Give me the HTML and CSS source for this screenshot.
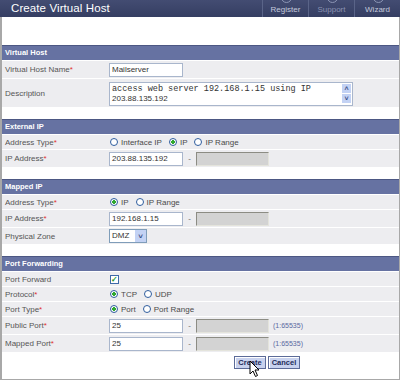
FILE: index.html
```html
<!DOCTYPE html>
<html>
<head>
  <meta charset="UTF-8">
  <title>Create Virtual Host</title>
  <link rel="stylesheet" href="styles.css">
</head>
<body>
  <div class="topbar">
    <div class="topbar-title">Create Virtual Host</div>
    <div class="topbar-tabs">
      <div class="tab"><span class="tab-icon"></span>Register</div>
      <div class="tab tab-dim"><span class="tab-icon"></span>Support</div>
      <div class="tab"><span class="tab-icon"></span>Wizard</div>
    </div>
  </div>

  <div class="page">
    <div class="section">
      <div class="section-head">Virtual Host</div>
      <div class="row">
        <div class="label">Virtual Host Name<span class="req">*</span></div>
        <div class="field"><div class="input">Mailserver</div></div>
      </div>
      <div class="row row-desc">
        <div class="label">Description</div>
        <div class="field">
          <div class="textarea">
            <div class="textarea-text">
              <div class="mono">access web server 192.168.1.15 using IP</div>
              <div>203.88.135.192</div>
            </div>
            <div class="scroll">
              <span class="scroll-btn">&#708;</span>
              <span class="scroll-btn">&#709;</span>
            </div>
          </div>
        </div>
      </div>
    </div>

    <div class="section">
      <div class="section-head">External IP</div>
      <div class="row row-sm">
        <div class="label">Address Type<span class="req">*</span></div>
        <div class="field options">
          <span class="opt"><span class="radio"></span>Interface IP</span>
          <span class="opt"><span class="radio checked"></span>IP</span>
          <span class="opt"><span class="radio"></span>IP Range</span>
        </div>
      </div>
      <div class="row">
        <div class="label">IP Address<span class="req">*</span></div>
        <div class="field">
          <div class="input">203.88.135.192</div>
          <span class="dash">-</span>
          <div class="input input-off"></div>
        </div>
      </div>
    </div>

    <div class="section">
      <div class="section-head">Mapped IP</div>
      <div class="row row-sm">
        <div class="label">Address Type<span class="req">*</span></div>
        <div class="field options">
          <span class="opt"><span class="radio checked"></span>IP</span>
          <span class="opt"><span class="radio"></span>IP Range</span>
        </div>
      </div>
      <div class="row">
        <div class="label">IP Address<span class="req">*</span></div>
        <div class="field">
          <div class="input">192.168.1.15</div>
          <span class="dash">-</span>
          <div class="input input-off"></div>
        </div>
      </div>
      <div class="row row-zone">
        <div class="label">Physical Zone</div>
        <div class="field">
          <div class="select"><span class="select-text">DMZ</span><span class="select-btn">&#709;</span></div>
        </div>
      </div>
    </div>

    <div class="section">
      <div class="section-head">Port Forwarding</div>
      <div class="row row-sm">
        <div class="label">Port Forward</div>
        <div class="field"><span class="checkbox">&#10003;</span></div>
      </div>
      <div class="row row-sm">
        <div class="label">Protocol<span class="req">*</span></div>
        <div class="field options">
          <span class="opt"><span class="radio checked"></span>TCP</span>
          <span class="opt"><span class="radio"></span>UDP</span>
        </div>
      </div>
      <div class="row row-sm">
        <div class="label">Port Type<span class="req">*</span></div>
        <div class="field options">
          <span class="opt"><span class="radio checked"></span>Port</span>
          <span class="opt"><span class="radio"></span>Port Range</span>
        </div>
      </div>
      <div class="row">
        <div class="label">Public Port<span class="req">*</span></div>
        <div class="field">
          <div class="input">25</div>
          <span class="dash">-</span>
          <div class="input input-off"></div>
          <span class="hint">(1:65535)</span>
        </div>
      </div>
      <div class="row">
        <div class="label">Mapped Port<span class="req">*</span></div>
        <div class="field">
          <div class="input">25</div>
          <span class="dash">-</span>
          <div class="input input-off"></div>
          <span class="hint">(1:65535)</span>
        </div>
      </div>
    </div>

    <div class="actions">
      <span class="btn">Create</span>
      <span class="btn">Cancel</span>
      <svg class="cursor" width="12" height="18" viewBox="0 0 12 18">
        <path d="M1 1 L1 14 L4 11 L6.5 16.5 L8.5 15.5 L6 10 L10 10 Z" fill="#fff" stroke="#000" stroke-width="1"/>
      </svg>
    </div>
  </div>
</body>
</html>
```

FILE: styles.css
```css
/* Admin page: Create Virtual Host */
body {
  margin: 0;
  font-family: "Liberation Sans", Arial, sans-serif;
  font-size: 8px;
  color: #4a4a4a;
  background: #fff;
  width: 400px;
  height: 380px;
  overflow: hidden;
}

.topbar {
  height: 17px;
  background: linear-gradient(#434c72, #353e62);
  display: flex;
  justify-content: space-between;
}

.topbar-title {
  color: #fff;
  font-size: 11.5px;
  padding-left: 11px;
  line-height: 17px;
  letter-spacing: 0.1px;
}

.topbar-tabs {
  display: flex;
}

.tab {
  position: relative;
  width: 45px;
  border-left: 1px solid #5a6488;
  color: #c4c9dc;
  text-align: center;
  line-height: 19px;
  font-size: 8px;
  overflow: hidden;
}

.tab-dim {
  color: #8a92b2;
}

.tab-icon {
  position: absolute;
  left: 50%;
  top: -8px;
  width: 9px;
  height: 9px;
  margin-left: -5px;
  border: 1px solid #8c95b5;
  border-radius: 50%;
}

.page {
  box-sizing: border-box;
  height: 363px;
  border-left: 2px solid #a8a8a8;
  border-right: 1px solid #a8a8a8;
  border-bottom: 1px solid #a8a8a8;
  padding-top: 28px;
}

.section {
  margin-bottom: 12px;
}

.section-head {
  height: 14px;
  line-height: 14px;
  border-top: 1px solid #4c5783;
  background: #6672a2;
  color: #fff;
  font-weight: bold;
  font-size: 7.5px;
  padding-left: 3px;
}

.row {
  display: grid;
  grid-template-columns: 107px 1fr;
  height: 17px;
  background: #ededf0;
  border-top: 1px solid #fff;
}

.row-sm {
  height: 14px;
}

.row-zone {
  height: 16px;
}

.row-desc {
  height: 28px;
}

.label {
  display: flex;
  align-items: center;
  padding-left: 3px;
  color: #555;
}

.req {
  color: #e03030;
}

.field {
  display: flex;
  align-items: center;
}

.input {
  box-sizing: border-box;
  width: 74px;
  height: 14px;
  line-height: 12px;
  padding-left: 2px;
  background: #fff;
  border: 1px solid #a9b6cc;
  color: #333;
  font-size: 8px;
}

.input-off {
  width: 73px;
  background: #d3d3d3;
  border-color: #8c8c84 #e4e4dc #e4e4dc #8c8c84;
}

.dash {
  width: 13px;
  text-align: center;
  color: #666;
}

.hint {
  margin-left: 4px;
  color: #5a69a0;
  font-size: 7px;
}

.textarea {
  box-sizing: border-box;
  width: 244px;
  height: 24px;
  margin-top: 1px;
  background: #fff;
  border: 1px solid #a9b6cc;
  display: flex;
  justify-content: space-between;
}

.textarea-text {
  padding: 1px 0 0 2px;
  line-height: 10px;
  color: #333;
}

.mono {
  font-family: "Liberation Mono", "Courier New", monospace;
  font-size: 8.5px;
}

.scroll {
  display: flex;
  flex-direction: column;
  gap: 1px;
  padding: 1px;
}

.scroll-btn {
  width: 9px;
  height: 9px;
  background: #c3d2f4;
  color: #3a4e86;
  font-size: 7px;
  line-height: 10px;
  text-align: center;
  font-weight: bold;
}

.options {
  gap: 7px;
  padding-left: 1px;
}

.opt {
  display: flex;
  align-items: center;
  gap: 2px;
}

.radio {
  box-sizing: border-box;
  width: 8px;
  height: 8px;
  border: 1px solid #2f5d9e;
  border-radius: 50%;
  background: #fff;
  margin-right: 1px;
}

.radio.checked {
  background: radial-gradient(circle, #2fa82f 0 1.6px, #fff 2px);
}

.checkbox {
  box-sizing: border-box;
  width: 9px;
  height: 9px;
  margin-left: 1px;
  border: 1px solid #3f6aa8;
  background: #fff;
  color: #22962a;
  font-size: 8px;
  font-weight: bold;
  line-height: 8px;
  text-align: center;
}

.select {
  box-sizing: border-box;
  width: 38px;
  height: 14px;
  background: #fff;
  border: 1px solid #7f9db9;
  display: flex;
  justify-content: space-between;
  align-items: stretch;
}

.select-text {
  padding-left: 2px;
  line-height: 12px;
  color: #333;
}

.select-btn {
  width: 11px;
  background: #c3d2f4;
  color: #3a4e86;
  font-size: 8px;
  font-weight: bold;
  line-height: 13px;
  text-align: center;
}

.actions {
  position: relative;
  display: flex;
  justify-content: flex-start;
  gap: 2px;
  padding-left: 232px;
  margin-top: -8px;
}

.btn {
  box-sizing: border-box;
  width: 32px;
  height: 13px;
  line-height: 11px;
  text-align: center;
  background: #c8d2ee;
  border: 1px solid #5c6b98;
  box-shadow: inset 1px 1px 0 #fff;
  color: #1e2a58;
  font-weight: bold;
  font-size: 7.5px;
}

.cursor {
  position: absolute;
  left: 247px;
  top: 4px;
}
```
